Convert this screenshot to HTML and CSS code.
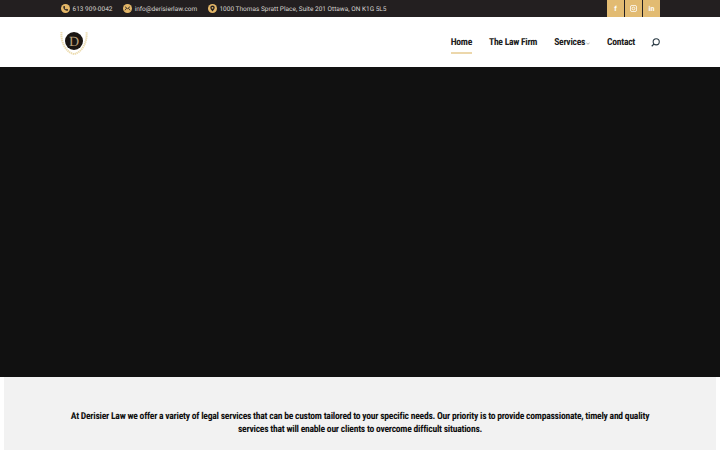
FILE: index.html
```html
<!DOCTYPE html>
<html lang="en">
<head>
  <meta charset="UTF-8" />
  <meta name="viewport" content="width=device-width, initial-scale=1.0" />
  <title>Derisier Law</title>
  <link rel="stylesheet" href="styles.css">
</head>

<body>

  <!-- Top bar -->
  <div class="top-bar">
    <div class="container">
      <div class="contact-list">
        <span class="contact-item">
          <svg class="contact-icon" viewBox="0 0 10 10"><circle cx="5" cy="5" r="5" fill="#e4b768"/><path d="M2.6 2.5 L4 2.2 L4.6 3.7 L3.9 4.4 Q4.6 5.6 5.7 6.1 L6.4 5.4 L7.8 6 L7.5 7.4 Q4.9 7.8 3.4 5.9 Q2.4 4.5 2.6 2.5Z" fill="#231f20"/></svg>
          613 909-0042
        </span>
        <span class="contact-item">
          <svg class="contact-icon" viewBox="0 0 10 10"><circle cx="5" cy="5" r="5" fill="#e4b768"/><path d="M2.2 3 L5 5.2 L7.8 3 M2.2 7 L4 4.6 M7.8 7 L6 4.6" stroke="#231f20" stroke-width="0.9" fill="none"/></svg>
          info@derisierlaw.com
        </span>
        <span class="contact-item">
          <svg class="contact-icon" viewBox="0 0 10 10"><circle cx="5" cy="5" r="5" fill="#e4b768"/><path d="M5 1.8 A2.5 2.5 0 0 1 7.5 4.3 Q7.5 5.8 5 8.4 Q2.5 5.8 2.5 4.3 A2.5 2.5 0 0 1 5 1.8Z" fill="#231f20"/><circle cx="5" cy="4.3" r="1" fill="#e4b768"/></svg>
          1000 Thomas Spratt Place, Suite 201 Ottawa, ON K1G 5L5
        </span>
      </div>
      <div class="social-links">
        <a href="#">f</a>
        <a href="#">
          <svg viewBox="0 0 8 8" class="social-icon"><rect x="0.5" y="0.5" width="7" height="7" rx="1.8" fill="none" stroke="#fff" stroke-width="0.9"/><circle cx="4" cy="4" r="1.6" fill="none" stroke="#fff" stroke-width="0.9"/></svg>
        </a>
        <a href="#">in</a>
      </div>
    </div>
  </div>

  <!-- Header -->
  <header class="site-header">
    <div class="container">
      <svg class="logo" viewBox="0 0 28 26">
        <path d="M1.5 3 C0.5 13 6 23.5 14 25 C22 23.5 27.5 13 26.5 3" fill="none" stroke="#ecdcb0" stroke-width="2" stroke-dasharray="1.4 0.6"/>
        <circle cx="14" cy="12" r="9" fill="#1a1512"/>
        <text x="14" y="16.8" class="logo-letter">D</text>
      </svg>
      <nav class="navbar">
        <ul>
          <li class="active"><a href="#">Home</a></li>
          <li><a href="#">The Law Firm</a></li>
          <li><a href="#">Services<svg class="caret" viewBox="0 0 4 3"><path d="M0.3 0.6 L2 2.3 L3.7 0.6" fill="none" stroke="#777" stroke-width="0.6"/></svg></a></li>
          <li><a href="#">Contact</a></li>
        </ul>
        <svg class="search-icon" viewBox="0 0 10 10"><circle cx="5.8" cy="4.2" r="3.4" fill="none" stroke="#2a3a44" stroke-width="1.2"/><path d="M3.3 6.7 L0.8 9.2" stroke="#2a3a44" stroke-width="1.3"/></svg>
      </nav>
    </div>
  </header>

  <!-- Hero -->
  <section class="hero"></section>

  <!-- Intro -->
  <section class="intro">
    <p>At Derisier Law we offer a variety of legal services that can be custom tailored to your specific needs. Our priority is to provide compassionate, timely and quality services that will enable our clients to overcome difficult situations.</p>
  </section>

</body>
</html>
```

FILE: styles.css
```css
* { margin: 0; padding: 0; box-sizing: border-box; }
html, body { height: 450px; overflow: hidden; }
body {
  font-family: 'Roboto', sans-serif;
  background-color: #fff;
  color: #111;
  text-rendering: geometricPrecision;
}
a { text-decoration: none; color: inherit; }
.container {
  display: flex;
  justify-content: space-between;
  align-items: center;
  margin: 0 60px;
  height: 100%;
}

/* --- top bar --- */
.top-bar {
  height: 17px;
  background-color: #231f20;
  color: #d8d5d2;
  font-size: 6.5px;
}
.contact-list {
  display: flex;
  gap: 10.7px;
  padding-left: 1px;
}
.contact-item {
  display: flex;
  align-items: center;
  gap: 2.5px;
}
.contact-icon {
  width: 9px;
  height: 9px;
}
.social-links {
  display: flex;
  gap: 1px;
  height: 100%;
}
.social-links a {
  width: 17px;
  display: flex;
  align-items: center;
  justify-content: center;
  background-color: #e2bb72;
  color: #fff;
  font-size: 7px;
  font-weight: 700;
}
.social-icon {
  width: 7px;
  height: 7px;
}

/* --- header --- */
.site-header {
  height: 50px;
  background-color: #fff;
}
.logo {
  width: 28px;
  height: 26px;
}
.logo-letter {
  font-family: 'Liberation Serif', serif;
  font-size: 14px;
  fill: #b8a07a;
  text-anchor: middle;
}
.navbar {
  display: flex;
  align-items: center;
  height: 100%;
}
.navbar ul {
  list-style: none;
  display: flex;
  gap: 17px;
  height: 100%;
}
.navbar li {
  display: flex;
  align-items: center;
  position: relative;
  padding-top: 1px;
  font-size: 9.6px;
  letter-spacing: -0.27px;
  font-weight: 700;
  font-stretch: 75%;
  color: #222;
}
.navbar li.active::after {
  content: "";
  position: absolute;
  left: 0;
  right: 0;
  bottom: 13px;
  height: 2px;
  background-color: #ecd7ab;
}
.caret {
  width: 4px;
  height: 3px;
  margin-left: 1px;
}
.search-icon {
  width: 9px;
  height: 9px;
  margin-left: 16px;
}

/* --- hero --- */
.hero {
  height: 310px;
  background-color: #111;
}

/* --- intro --- */
.intro {
  height: 73px;
  margin: 0 4px;
  padding-top: 33px;
  background-color: #f2f2f2;
  text-align: center;
}
.intro p {
  max-width: 590px;
  margin: 0 auto;
  font-size: 9.6px;
  letter-spacing: -0.24px;
  line-height: 13px;
  font-weight: 700;
  font-stretch: 75%;
  color: #111;
}
```
